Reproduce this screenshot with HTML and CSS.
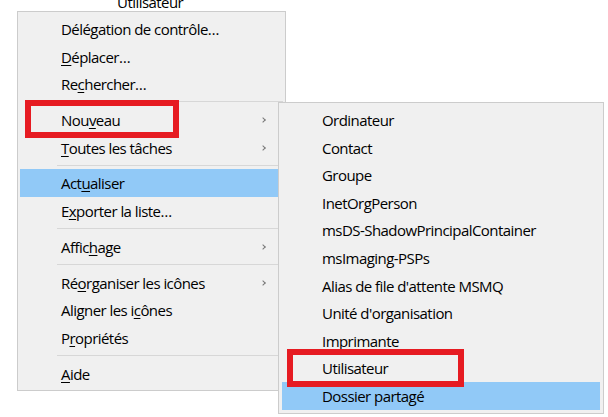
FILE: index.html
```html
<!DOCTYPE html>
<html lang="fr">
<head>
    <meta charset="UTF-8">
    <meta name="viewport" content="width=device-width, initial-scale=1.0">
    <title>Menu contextuel</title>
    <link rel="stylesheet" href="styles.css">
</head>
<body>

    <div class="stage">
        <div class="caption"><span>Utilisateur</span></div>

        <div class="menu main-menu">
            <div class="item">Délégation de contrôle…</div>
            <div class="item"><u>D</u>éplacer…</div>
            <div class="item">Re<u>c</u>hercher…</div>
            <div class="sep"></div>
            <div class="item has-sub">Nou<u>v</u>eau</div>
            <div class="item has-sub"><u>T</u>outes les tâches</div>
            <div class="sep"></div>
            <div class="item active">Act<u>u</u>aliser</div>
            <div class="item">E<u>x</u>porter la liste…</div>
            <div class="sep"></div>
            <div class="item has-sub">Affic<u>h</u>age</div>
            <div class="sep"></div>
            <div class="item has-sub">Ré<u>o</u>rganiser les icônes</div>
            <div class="item">Aligner les i<u>c</u>ônes</div>
            <div class="item">P<u>r</u>opriétés</div>
            <div class="sep"></div>
            <div class="item"><u>A</u>ide</div>
        </div>

        <!-- sous-menu "Nouveau" -->
        <div class="menu sub-menu">
            <div class="item">Ordinateur</div>
            <div class="item">Contact</div>
            <div class="item">Groupe</div>
            <div class="item">InetOrgPerson</div>
            <div class="item">msDS-ShadowPrincipalContainer</div>
            <div class="item">msImaging-PSPs</div>
            <div class="item">Alias de file d'attente MSMQ</div>
            <div class="item">Unité d'organisation</div>
            <div class="item">Imprimante</div>
            <div class="item">Utilisateur</div>
            <div class="item active">Dossier partagé</div>
        </div>

        <div class="mark mark-new"></div>
        <div class="mark mark-user"></div>
    </div>

</body>
</html>
```

FILE: styles.css
```css
body {
    margin: 0;
    background: #ffffff;
    font-family: "Open Sans", "Noto Sans", sans-serif;
    font-size: 15px;
    color: #000;
    letter-spacing: -0.55px;
}
.stage {
    position: relative;
    width: 608px;
    height: 417px;
    overflow: hidden;
}
.caption {
    height: 11px;
    display: flex;
    align-items: flex-end;
    padding-left: 117px;
}
.caption span {
    line-height: 20px;
    margin-bottom: -1px;
}
.menu {
    box-sizing: border-box;
    background: #f0f0f0;
    border: 1px solid #cccccc;
}
.main-menu {
    width: 269px;
    margin-left: 17px;
    padding: 3px 0;
}
.sub-menu {
    position: absolute;
    left: 278px;
    top: 102px;
    width: 326px;
    padding: 3px 0;
}
.item {
    position: relative;
    height: 27.6px;
    line-height: 29px;
    padding-left: 41px;
    margin: 0 2px;
    white-space: nowrap;
}
.sub-menu .item {
    margin: 0 3px;
    padding-left: 40px;
}
.item u {
    text-decoration-thickness: 1px;
    text-underline-offset: 2px;
}
.item.active {
    background: #91c9f7;
}
.item.has-sub::after {
    content: "";
    position: absolute;
    right: 18px;
    top: 12px;
    width: 3px;
    height: 3px;
    border-right: 1px solid #777;
    border-top: 1px solid #777;
    transform: rotate(45deg);
}
.sep {
    height: 1px;
    margin: 3.625px 2px 3.625px 39px;
    background: #d7d7d7;
}
.mark {
    position: absolute;
    box-sizing: border-box;
    border: 6px solid #e61b22;
}
.mark-new {
    left: 25px;
    top: 100px;
    width: 154px;
    height: 38px;
}
.mark-user {
    left: 287px;
    top: 349px;
    width: 177px;
    height: 38px;
}
```
